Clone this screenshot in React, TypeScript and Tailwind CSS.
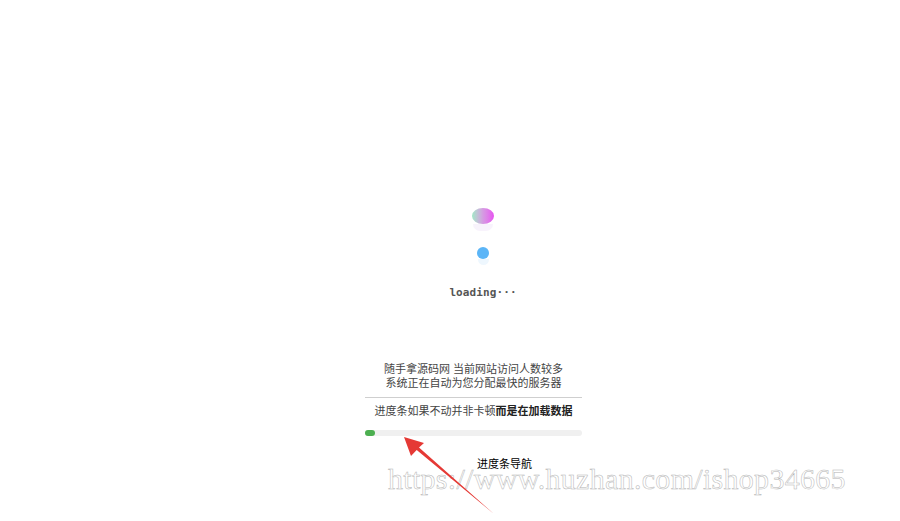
import React from 'react';

const cjk = "font-['Liberation_Sans','Noto_Sans_CJK_SC',sans-serif]";

const Loader: React.FC = () => (
    <div className="flex flex-col items-center w-[70px]">
        {/* gradient bubble with faint reflection */}
        <div className="w-[22px] h-[16px] rounded-[50%] bg-gradient-to-r from-[#9fe8c6] via-[#d59ae2] to-[#e64ff0]"></div>
        <div className="w-[20px] h-[7px] rounded-b-full bg-[#f6f0fb] opacity-80"></div>
        <div className="h-[16px]"></div>
        <div className="w-[12px] h-[12px] rounded-full bg-[#5bb5f7]"></div>
        <div className="w-[11px] h-[6px] rounded-b-full bg-[#eef7fe]"></div>
        <div className="mt-[21px] font-['DejaVu_Sans_Mono',monospace] font-bold text-[11px] leading-[14px] text-[#555] tracking-[0.1px]">
            loading···
        </div>
    </div>
);

const App: React.FC = () => {
    return (
        <div className="relative w-full h-[521px] bg-white overflow-hidden">
            <div className="flex flex-col pt-[208px] pl-[448px]">
                <Loader />
            </div>

            <div className={`flex flex-col w-[217px] ml-[365px] mt-[62px] ${cjk}`}>
                <div className="text-center text-[11px] leading-[14px] text-[#444]">
                    <p>随手拿源码网 当前网站访问人数较多</p>
                    <p>系统正在自动为您分配最快的服务器</p>
                </div>
                <div className="mt-[7px] h-px bg-[#cfcfcf]"></div>
                <p className="mt-[6px] text-center text-[11px] leading-[14px] text-[#444]">
                    进度条如果不动并非卡顿<span className="font-bold text-[#222]">而是在加载数据</span>
                </p>
                <div className="mt-[12px] h-[6px] rounded-full bg-[#f0f0f0]">
                    <div className="h-full w-[10px] rounded-full bg-[#4caf50]"></div>
                </div>
                <p className="mt-[21px] pl-[112px] text-[11px] leading-[14px] text-black">进度条导航</p>
            </div>

            {/* watermark */}
            <div className="absolute left-[388px] top-[464px] font-['Liberation_Serif',serif] text-[30px] leading-[30px] tracking-[0.3px] text-white [-webkit-text-stroke:0.5px_#b4b4b4] whitespace-nowrap">
                https://www.huzhan.com/ishop34665
            </div>

            {/* red arrow */}
            <svg className="absolute left-0 top-0 pointer-events-none" width="900" height="521" viewBox="0 0 900 521">
                <polygon
                    points="404,437 424,443 419,447.6 494,514 416.7,450 411,456"
                    fill="#e53935"
                />
            </svg>
        </div>
    );
};

export default App;
